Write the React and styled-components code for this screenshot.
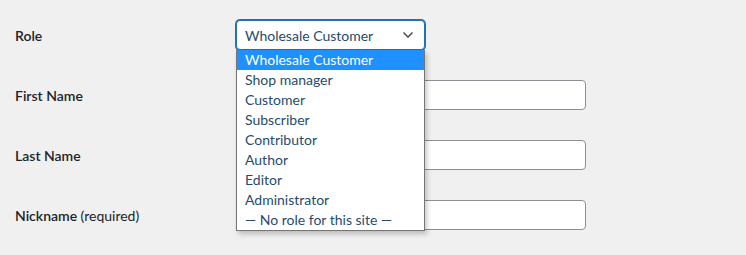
import React from 'react';
import styled, { createGlobalStyle } from 'styled-components';

const GlobalStyle = createGlobalStyle`
    body {
        margin: 0;
        background: #f0f0f1;
        font-family: Lato, "Noto Sans", sans-serif;
        font-size: 14px;
        color: #1d2327;
    }
`

const Page = styled.div`
    width: 746px;
    height: 255px;
    padding: 5px 0 0 15px;
    box-sizing: border-box;
    overflow: hidden;
`

const Row = styled.div`
    display: grid;
    grid-template-columns: 221px 1fr;
    align-items: center;
    height: 60px;
`

const Label = styled.label`
    font-weight: 600;
    line-height: 1.3;
    padding-top: 3px;
    color: #1d2327;
`

const Note = styled.span`
    font-weight: 400;
`

const SelectWrap = styled.div`
    position: relative;
    width: 189px;
    z-index: 2;
`

const Select = styled.div`
    display: flex;
    align-items: center;
    justify-content: space-between;
    height: 30px;
    box-sizing: border-box;
    padding: 0 10px 0 8px;
    background: #fff;
    border: 1px solid #2271b1;
    border-radius: 4px;
    box-shadow: 0 0 0 1px #2271b1;
    color: #264b6e;
`

const List = styled.ul`
    position: absolute;
    top: 30px;
    left: 0;
    width: 189px;
    box-sizing: border-box;
    margin: 0;
    padding: 0;
    list-style: none;
    background: #fff;
    border: 1px solid #767676;
    border-top: none;
    box-shadow: 2px 3px 5px rgba(0, 0, 0, 0.22);
`

const Option = styled.li`
    height: 20px;
    line-height: 20px;
    padding-left: 8px;
    white-space: nowrap;
    color: ${p => p.$active ? '#fff' : '#264b6e'};
    background: ${p => p.$active ? '#1e90ff' : 'transparent'};
`

const Input = styled.div`
    width: 350px;
    height: 30px;
    box-sizing: border-box;
    background: #fff;
    border: 1px solid #8c8f94;
    border-radius: 4px;
`

const Chevron = () => (
    <svg width="12" height="8" viewBox="0 0 12 8">
        <path d="M1.5 1.5 L6 6 L10.5 1.5" fill="none" stroke="#50575e" strokeWidth="1.6" />
    </svg>
)

const roles = [
    'Wholesale Customer',
    'Shop manager',
    'Customer',
    'Subscriber',
    'Contributor',
    'Author',
    'Editor',
    'Administrator',
    '— No role for this site —',
]

export default function App() {
    return (
        <Page>
            <GlobalStyle />
            <Row>
                <Label>Role</Label>
                <SelectWrap>
                    <Select>
                        <span>Wholesale Customer</span>
                        <Chevron />
                    </Select>
                    <List>
                        {roles.map((r, i) => (
                            <Option key={r} $active={i === 0}>{r}</Option>
                        ))}
                    </List>
                </SelectWrap>
            </Row>
            <Row>
                <Label>First Name</Label>
                <Input />
            </Row>
            <Row>
                <Label>Last Name</Label>
                <Input />
            </Row>
            <Row>
                <Label>Nickname <Note>(required)</Note></Label>
                <Input />
            </Row>
        </Page>
    )
}
